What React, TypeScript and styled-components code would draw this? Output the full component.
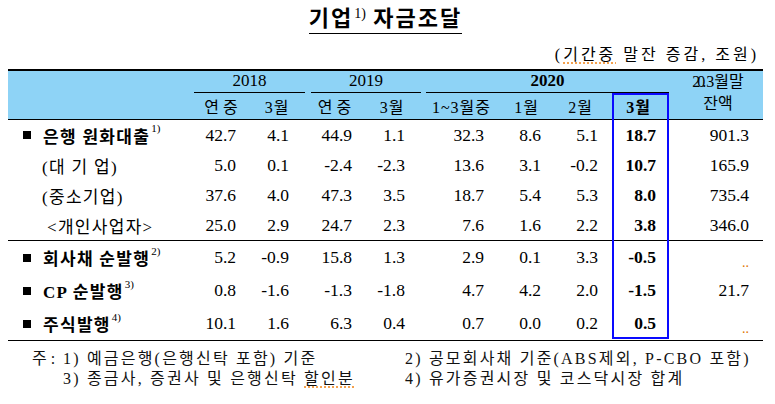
import React from "react";
import styled, { createGlobalStyle } from "styled-components";

const GlobalStyle = createGlobalStyle`
  html, body { margin: 0; padding: 0; background: #fff; }
  body {
    font-family: "Liberation Serif", "Noto Sans CJK KR", serif;
    color: #000;
  }
`;

const COLS = "186px 58px 56px 57px 58px 77px 53px 59px 57px 94px";
const BLUE_HEAD = "#8ed3f6";

const Page = styled.div`
  width: 775px;
  height: 404px;
  overflow: hidden;
`;

const TitleRow = styled.div`
  display: flex;
  justify-content: center;
  padding-top: 6px;
  padding-right: 4px;
  height: 34px;
  box-sizing: border-box;
`;

const Title = styled.h1`
  margin: 0;
  font-size: 22px;
  font-weight: 700;
  line-height: 26px;
  letter-spacing: 2px;
  border-bottom: 1.5px solid #000;
  padding-bottom: 0;
  height: 27px;
  white-space: nowrap;
`;

const Sup = styled.sup<{ $size?: number }>`
  font-family: "Liberation Serif", serif;
  font-size: ${(p) => p.$size ?? 11}px;
  font-weight: 400;
  vertical-align: baseline;
  position: relative;
  top: -0.6em;
  letter-spacing: 0;
  margin-left: 1px;
`;

const UnitRow = styled.div`
  display: flex;
  justify-content: flex-end;
  padding: 12px 16px 5px 0;
  font-size: 16px;
  line-height: 18px;
  letter-spacing: 3px;
`;

const Squiggle = styled.span`
  text-decoration-line: underline;
  text-decoration-style: dotted;
  text-decoration-color: #f08a24;
  text-underline-offset: 3px;
`;

const TableWrap = styled.div`
  position: relative;
  margin-left: 8px;
  width: 755px;
`;

const Header = styled.div`
  display: grid;
  grid-template-columns: ${COLS};
  grid-template-rows: 22px 26px;
  background: ${BLUE_HEAD};
  border-top: 2px solid #000;
  border-bottom: 1px solid #000;
`;

const HeadBlank = styled.div`
  grid-row: 1 / span 2;
`;

const GroupHead = styled.div<{ $span: number; $ml: number; $mr: number; $bold?: boolean }>`
  grid-column: span ${(p) => p.$span};
  margin: 0 ${(p) => p.$mr}px 0 ${(p) => p.$ml}px;
  border-bottom: 1px solid #000;
  display: flex;
  justify-content: center;
  align-items: flex-end;
  padding-bottom: 1px;
  font-size: 17px;
  line-height: 20px;
  font-weight: ${(p) => (p.$bold ? 700 : 400)};
`;

const SubHead = styled.div<{ $bold?: boolean; $shift?: number }>`
  display: flex;
  justify-content: center;
  align-items: center;
  font-size: 16px;
  letter-spacing: 1px;
  font-weight: ${(p) => (p.$bold ? 700 : 400)};
  padding-right: ${(p) => p.$shift ?? 0}px;
  white-space: nowrap;
`;

const Spaced = styled.span`
  letter-spacing: 4px;
`;

const BalanceHead = styled.div`
  grid-row: 1 / span 2;
  grid-column: 10;
  display: flex;
  flex-direction: column;
  align-items: center;
  justify-content: center;
  font-size: 16px;
  line-height: 22px;
  padding-bottom: 4px;
  padding-left: 4px;
`;

const Squeeze = styled.span`
  letter-spacing: -3px;
  margin-right: 3px;
`;

const BodyGroup = styled.div<{ $rowH: number }>`
  display: grid;
  grid-template-columns: ${COLS};
  grid-auto-rows: ${(p) => p.$rowH}px;
  border-bottom: 1px solid #000;
`;

const Label = styled.div<{ $indent: number; $bold?: boolean }>`
  display: flex;
  align-items: center;
  padding-left: ${(p) => p.$indent}px;
  font-size: 17px;
  letter-spacing: 1.3px;
  font-weight: ${(p) => (p.$bold ? 700 : 400)};
  white-space: nowrap;
`;

const Bullet = styled.span`
  display: inline-block;
  width: 8px;
  height: 8px;
  background: #000;
  margin-right: 12px;
`;

const Num = styled.div<{ $pr: number; $bold?: boolean }>`
  display: flex;
  align-items: center;
  justify-content: flex-end;
  padding-right: ${(p) => p.$pr}px;
  font-size: 17.5px;
  font-weight: ${(p) => (p.$bold ? 700 : 400)};
  white-space: nowrap;
`;

const Dots = styled.span`
  color: #e07400;
  font-size: 14px;
  position: relative;
  top: 5px;
  letter-spacing: 0;
`;

const Highlight = styled.div`
  position: absolute;
  left: 604px;
  top: 24px;
  width: 57px;
  height: 246px;
  border: 2.5px solid #0a0aff;
  box-sizing: border-box;
  pointer-events: none;
`;

const Notes = styled.div`
  display: grid;
  grid-template-columns: 31px 342px auto;
  grid-auto-rows: 20px;
  padding: 8px 0 0 32px;
  font-size: 16px;
  line-height: 20px;
  letter-spacing: 2.2px;
  color: #111;
  white-space: nowrap;
`;

const NotePrefix = styled.span`
  letter-spacing: 0;
`;

const PADS = [16, 19, 13, 18, 16, 12, 14, 13, 14];

type Row = {
  label: React.ReactNode;
  indent: number;
  bold?: boolean;
  values: React.ReactNode[];
};

const group1: Row[] = [
  {
    label: (
      <>
        <Bullet />
        은행 원화대출<Sup>1)</Sup>
      </>
    ),
    indent: 15,
    bold: true,
    values: ["42.7", "4.1", "44.9", "1.1", "32.3", "8.6", "5.1", "18.7", "901.3"],
  },
  {
    label: <>(대 기 업)</>,
    indent: 34,
    values: ["5.0", "0.1", "-2.4", "-2.3", "13.6", "3.1", "-0.2", "10.7", "165.9"],
  },
  {
    label: <>(중소기업)</>,
    indent: 34,
    values: ["37.6", "4.0", "47.3", "3.5", "18.7", "5.4", "5.3", "8.0", "735.4"],
  },
  {
    label: <>&lt;개인사업자&gt;</>,
    indent: 39,
    values: ["25.0", "2.9", "24.7", "2.3", "7.6", "1.6", "2.2", "3.8", "346.0"],
  },
];

const group2: Row[] = [
  {
    label: (
      <>
        <Bullet />
        회사채 순발행<Sup>2)</Sup>
      </>
    ),
    indent: 15,
    bold: true,
    values: ["5.2", "-0.9", "15.8", "1.3", "2.9", "0.1", "3.3", "-0.5", <Dots key="d">..</Dots>],
  },
  {
    label: (
      <>
        <Bullet />
        CP 순발행<Sup>3)</Sup>
      </>
    ),
    indent: 15,
    bold: true,
    values: ["0.8", "-1.6", "-1.3", "-1.8", "4.7", "4.2", "2.0", "-1.5", "21.7"],
  },
  {
    label: (
      <>
        <Bullet />
        주식발행<Sup>4)</Sup>
      </>
    ),
    indent: 15,
    bold: true,
    values: ["10.1", "1.6", "6.3", "0.4", "0.7", "0.0", "0.2", "0.5", <Dots key="d">..</Dots>],
  },
];

const Rows: React.FC<{ rows: Row[] }> = ({ rows }) => (
  <>
    {rows.map((r, i) => (
      <React.Fragment key={i}>
        <Label $indent={r.indent} $bold={r.bold}>
          {r.label}
        </Label>
        {r.values.map((v, j) => (
          <Num key={j} $pr={PADS[j]} $bold={j === 7}>
            {v}
          </Num>
        ))}
      </React.Fragment>
    ))}
  </>
);

export default function App() {
  return (
    <Page>
      <GlobalStyle />
      <TitleRow>
        <Title>
          기업<Sup $size={14}>1)</Sup> 자금조달
        </Title>
      </TitleRow>
      <UnitRow>
        <span>
          (<Squiggle>기간중</Squiggle> 말잔 증감, 조원)
        </span>
      </UnitRow>
      <TableWrap>
        <Header>
          <HeadBlank />
          <GroupHead $span={2} $ml={0} $mr={3}>
            2018
          </GroupHead>
          <GroupHead $span={2} $ml={3} $mr={2}>
            2019
          </GroupHead>
          <GroupHead $span={4} $ml={3} $mr={0} $bold>
            2020
          </GroupHead>
          <BalanceHead>
            <span>
              <Squeeze>20.</Squeeze>3월말
            </span>
            <span>잔액</span>
          </BalanceHead>
          <SubHead>
            <Spaced>연중</Spaced>
          </SubHead>
          <SubHead $shift={6}>3월</SubHead>
          <SubHead>
            <Spaced>연중</Spaced>
          </SubHead>
          <SubHead $shift={4}>3월</SubHead>
          <SubHead>1~3월중</SubHead>
          <SubHead>1월</SubHead>
          <SubHead $shift={4}>2월</SubHead>
          <SubHead $bold $shift={4}>
            3월
          </SubHead>
        </Header>
        <BodyGroup $rowH={30}>
          <Rows rows={group1} />
        </BodyGroup>
        <BodyGroup $rowH={33}>
          <Rows rows={group2} />
        </BodyGroup>
        <Highlight />
      </TableWrap>
      <Notes>
        <NotePrefix>주 :</NotePrefix>
        <span>1) 예금은행(은행신탁 포함) 기준</span>
        <span>2) 공모회사채 기준(ABS제외, P-CBO 포함)</span>
        <span />
        <span>
          3) 종금사, 증권사 및 은행신탁 <Squiggle>할인분</Squiggle>
        </span>
        <span>4) 유가증권시장 및 코스닥시장 합계</span>
      </Notes>
    </Page>
  );
}
